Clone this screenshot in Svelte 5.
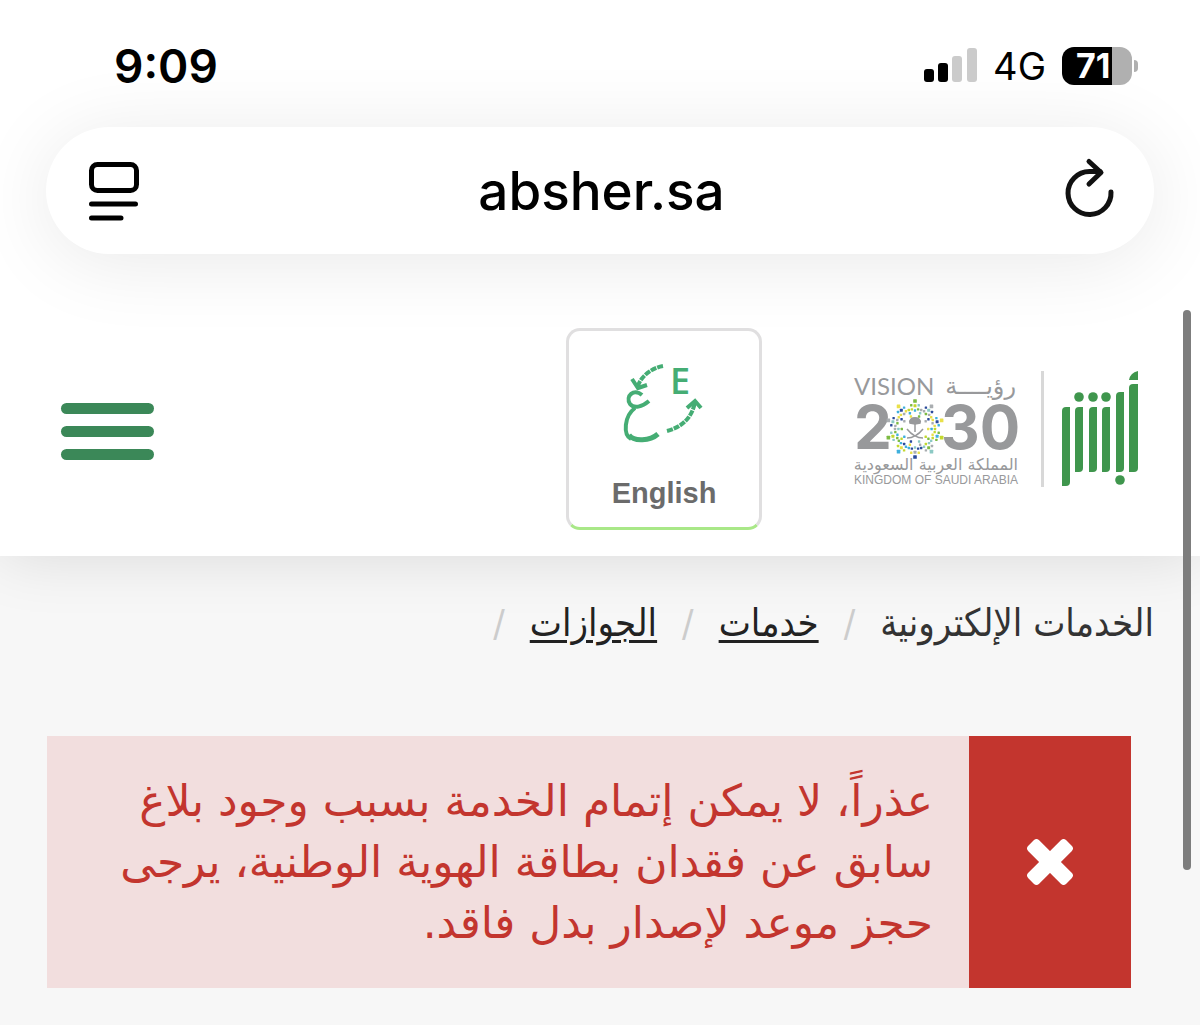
<script>
    const crumbs = [
        { label: 'الخدمات الإلكترونية' },
        { label: 'خدمات', href: '#services' },
        { label: 'الجوازات', href: '#passports' }
    ];

    const palette = ['#7dbb42', '#3fb0dd', '#2b4a9b', '#8cc9c4', '#c3d82e', '#e9e04a', '#a9adb0'];

    // ten-pointed star: nested zigzag contours made of small squares
    const dots = [];
    [1, 0.83, 0.66].forEach((scale, ring) => {
        for (let i = 0; i < 40; i++) {
            if (ring === 2 && i % 2) continue;
            const angle = (i * Math.PI) / 20;
            const radius = scale * [28, 24, 20, 24][i % 4];
            dots.push({
                x: 62 + radius * Math.sin(angle),
                y: 59 - radius * Math.cos(angle),
                size: i % 4 ? 2.4 : 3.6 * scale,
                color: palette[(i * 3 + ring * 4 + (i >> 2)) % palette.length]
            });
        }
    });
</script>

<div class="page">
    <header>
        <div class="status">
            <time>9:09</time>
            <div class="signals">
                <svg width="54" height="34" viewBox="0 0 54 34" aria-hidden="true">
                    <rect x="1" y="20" width="10" height="13" rx="3" />
                    <rect x="15" y="14" width="10" height="19" rx="3" />
                    <rect x="29" y="7" width="10" height="26" rx="3" fill="#cbcbcb" />
                    <rect x="44" y="-1" width="10" height="34" rx="3" fill="#cbcbcb" />
                </svg>
                <span class="network">4G</span>
                <div class="battery"><span>71</span></div>
            </div>
        </div>

        <div class="address">
            <button aria-label="Page menu">
                <svg width="50" height="60" viewBox="0 0 50 60" fill="none" stroke="#000" stroke-width="5" stroke-linecap="round">
                    <rect x="2.5" y="3.5" width="45" height="26" rx="6" />
                    <path d="M2.5 43H46.5M2.5 57H32" />
                </svg>
            </button>
            <span class="host">absher.sa</span>
            <button aria-label="Reload">
                <svg width="50" height="60" viewBox="0 0 50 60" fill="none" stroke="#111" stroke-width="5" stroke-linecap="round" stroke-linejoin="round">
                    <path d="M47 31A21.500 21.500 0 1 1 25.500 10.500H36" />
                    <path d="M25 0.500L37 11.500L25 23" />
                </svg>
            </button>
        </div>

        <div class="site">
            <button class="burger" aria-label="Menu"><i></i><i></i><i></i></button>
            <button class="language">
                <svg width="80" height="90" viewBox="0 -10 80 90" fill="none" stroke="#45ad74" stroke-width="3" aria-hidden="true">
                    <path d="M39 1C28 3 17 11 14 21" stroke-width="4" stroke-dasharray="6 1" />
                    <path d="M8 14L14 23L23 20" stroke-width="4" />
                    <path d="M43 66C58 62 68 53 71 37" stroke-width="4" stroke-dasharray="6 1" />
                    <path d="M63 43L71 36L77 43" stroke-width="4" />
                    <path d="M18 30C10 23 1 31 6 39C10 44 18 42 25 36M11 43C0 51 -1 70 7 74" stroke-width="4" />
                    <path d="M5 70C10 77 26 76 34 69" stroke-width="5" />
                    <text class="latin" x="46" y="29">E</text>
                </svg>
                <span>English</span>
            </button>
            <a class="logos" href="#home" aria-label="Absher">
                <svg width="290" height="120" viewBox="0 -1 290 120">
                    <g fill="#98999b">
                        <text x="1" y="25" font-size="24">VISION</text>
                        <text class="arabic" x="163" y="24" font-size="24" direction="rtl">رؤيــــة</text>
                        <text class="year" x="1" y="79" font-size="60">2</text>
                        <text class="year" x="88" y="79" font-size="60">30</text>
                        <text class="arabic" x="165" y="100" font-size="16" direction="rtl">المملكة العربية السعودية</text>
                        <text class="kingdom" x="1" y="114" font-size="12">KINGDOM OF SAUDI ARABIA</text>
                    </g>
                    {#each dots as dot}
                        <rect x={dot.x - dot.size / 2} y={dot.y - dot.size / 2} width={dot.size} height={dot.size} rx="0.500" fill={dot.color} />
                    {/each}
                    <g fill="none" stroke="#98999b" stroke-width="1.500">
                        <path d="M62 52V62M54 59C58 64 64 68 70 68M70 59C66 64 60 68 54 68" />
                        <path d="M57 53C55 46 69 46 67 53L62 54Z" fill="#98999b" />
                    </g>
                    <rect x="188" y="1" width="3" height="116" fill="#d8d8d8" />
                    <g fill="#3f964d">
                        <path d="M209 41Q209 37 213 37H217V112Q217 116 213 116H209Z" />
                        <path d="M222 41Q222 37 226 37H230V98Q230 102 226 102H222Z" />
                        <path d="M236 41Q236 37 240 37H244V98Q244 102 240 102H236Z" />
                        <path d="M249 41Q249 37 253 37H257V98Q257 102 253 102H249Z" />
                        <path d="M263 26Q263 22 267 22H271V98Q271 102 267 102H263Z" />
                        <path d="M276 18Q276 14 280 14H285V98Q285 102 281 102H276Z" />
                        <path d="M276 10Q277 3 285 1V10Z" />
                        <circle cx="226" cy="27" r="4.800" />
                        <circle cx="240" cy="27" r="4.800" />
                        <circle cx="253" cy="27" r="4.800" />
                        <circle cx="267" cy="110" r="4.800" />
                    </g>
                </svg>
            </a>
        </div>
    </header>

    <main dir="rtl">
        <nav aria-label="مسار التنقل">
            {#each crumbs as crumb}
                {#if crumb.href}
                    <a href={crumb.href}>{crumb.label}</a>
                {:else}
                    <span>{crumb.label}</span>
                {/if}
                <span class="slash">/</span>
            {/each}
        </nav>

        <div class="alert" role="alert">
            <div class="alert-icon">
                <svg width="46" height="46" viewBox="0 0 48 48" aria-hidden="true">
                    <g fill="#fff" transform="rotate(45 24 24)">
                        <rect x="-4" y="16" width="56" height="16" rx="4" />
                        <rect x="16" y="-4" width="16" height="56" rx="4" />
                    </g>
                </svg>
            </div>
            <p>عذراً، لا يمكن إتمام الخدمة بسبب وجود بلاغ سابق عن فقدان بطاقة الهوية الوطنية، يرجى حجز موعد لإصدار بدل فاقد.</p>
        </div>
    </main>
    <div class="scrollbar"></div>
</div>

<style>
    :global(body) {
        background: #f7f7f7;
    }

    .page {
        position: relative;
        min-height: 100vh;
        overflow: hidden;
        font-family: Inter, sans-serif;
    }

    header {
        background: #fff;
        box-shadow: 0 0 60px rgba(0, 0, 0, 0.12);
    }

    button {
        padding: 0;
        border: 0;
        background: none;
    }

    svg {
        display: block;
        overflow: visible;
    }

    .status {
        display: flex;
        justify-content: space-between;
        align-items: center;
        height: 127px;
        padding: 4px 68px 0 114px;
        box-sizing: border-box;
    }

    time {
        font-size: 46px;
        font-weight: 600;
    }

    .signals {
        display: flex;
        align-items: center;
        gap: 16px;
    }

    .network {
        font-size: 38px;
    }

    .battery {
        position: relative;
        width: 70px;
        height: 38px;
        padding-left: 14px;
        box-sizing: border-box;
        border-radius: 12px;
        background: linear-gradient(90deg, #000 71%, #b0b0b0 71%);
        color: #fff;
        font-size: 34px;
        font-weight: 700;
        line-height: 38px;
    }

    .battery::after {
        content: '';
        position: absolute;
        top: 13px;
        left: 72px;
        width: 4px;
        height: 12px;
        border-radius: 0 6px 6px 0;
        background: #b0b0b0;
    }

    .address {
        display: flex;
        justify-content: space-between;
        align-items: center;
        height: 127px;
        margin: 0 46px;
        padding: 0 40px 0 43px;
        box-sizing: border-box;
        border-radius: 64px;
        background: #fff;
        box-shadow: 0 8px 80px rgba(0, 0, 0, 0.09);
    }

    .host {
        font-size: 53px;
        font-weight: 500;
    }

    .site {
        display: flex;
        align-items: center;
        padding: 74px 57px 26px 61px;
    }

    .burger {
        display: grid;
        gap: 12px;
        width: 93px;
        margin-top: 4px;
        margin-right: auto;
    }

    .burger i {
        height: 11px;
        border-radius: 6px;
        background: #3b8858;
    }

    .language {
        display: flex;
        flex-direction: column;
        align-items: center;
        justify-content: space-between;
        width: 196px;
        height: 202px;
        margin-right: 91px;
        padding: 24px 0 18px;
        border: 3px solid #e0dfe0;
        border-bottom-color: #a9e888;
        border-radius: 14px;
        background: #fff;
        color: #6b6b6b;
        font: 700 29px/32px 'Liberation Sans', sans-serif;
    }

    .latin {
        fill: #45ad74;
        stroke: none;
        font: 600 36px 'Open Sans', sans-serif;
    }

    .logos {
        font-family: Lato, sans-serif;
    }

    .arabic {
        font-family: 'DejaVu Sans', sans-serif;
    }

    .year {
        font-family: Inter, sans-serif;
        font-weight: 700;
    }

    .kingdom {
        font-family: 'Liberation Sans', sans-serif;
    }

    main {
        padding: 39px 46px 37px;
        font-family: 'DejaVu Sans', sans-serif;
    }

    nav {
        display: flex;
        gap: 25px;
        color: #333;
        font-family: 'DejaVu Sans Condensed', 'DejaVu Sans', sans-serif;
        font-size: 38px;
        line-height: 56px;
    }

    nav a {
        color: #222;
        text-decoration-thickness: 3px;
        text-underline-offset: 4px;
    }

    .slash {
        color: #ccc;
    }

    .alert {
        display: flex;
        margin: 85px 23px 0 1px;
        background: #f2dede;
    }

    .alert-icon {
        display: grid;
        flex: none;
        place-items: center;
        width: 162px;
        background: #c3352e;
    }

    .alert p {
        margin: 0;
        padding: 34px 36px 35px;
        color: #c3352e;
        font-size: 44px;
        line-height: 61px;
    }

    .scrollbar {
        position: absolute;
        top: 310px;
        right: 9px;
        width: 8px;
        height: 560px;
        border-radius: 4px;
        background: #7d7d7d;
    }
</style>
